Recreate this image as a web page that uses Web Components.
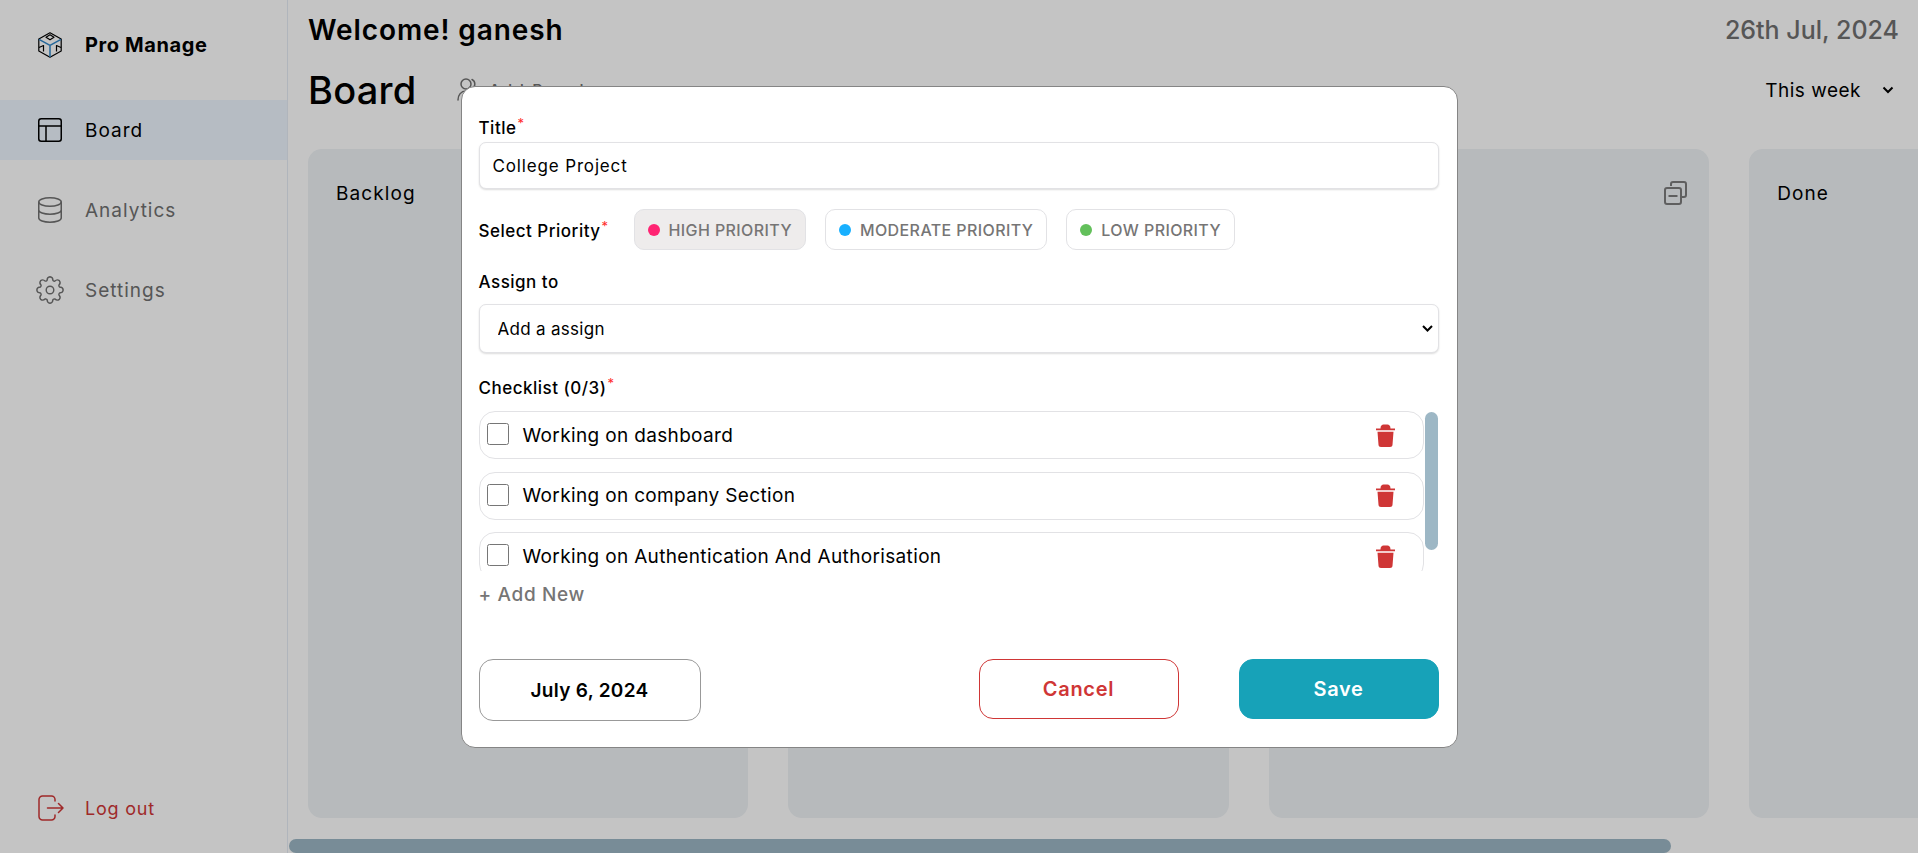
<!DOCTYPE html>
<html lang="en">
<head>
<meta charset="utf-8">
<title>Pro Manage</title>
<style>
    html, body { margin: 0; height: 100%; overflow: hidden; background: #fff; }
    body { font-family: "Inter", "Liberation Sans", sans-serif; color: #000; }
    svg { display: block; }
</style>
</head>
<body>
<app-shell>
    <side-bar slot="side">
        <nav-item active>
            <svg slot="icon" width="24" height="24" viewBox="0 0 24 24" fill="none" stroke="#000" stroke-width="1.5"><rect x=".75" y=".75" width="22.5" height="22.5" rx="2.5"/><path d="M1 8h22M8 8v15"/></svg>
            Board
        </nav-item>
        <nav-item>
            <svg slot="icon" width="24" height="26" viewBox="0 0 24 26" fill="none" stroke="#707070" stroke-width="1.5"><ellipse cx="12" cy="5" rx="11.25" ry="4.2"/><path d="M.75 5v16c0 2.4 5 4.2 11.25 4.2s11.25-1.8 11.25-4.2V5M.75 13c0 2.4 5 4.2 11.25 4.2s11.25-1.8 11.25-4.2"/></svg>
            Analytics
        </nav-item>
        <nav-item>
            <svg slot="icon" id="gear" width="28" height="28" viewBox="0 0 28 28" fill="none" stroke="#707070" stroke-width="1.4" stroke-linejoin="round"><circle cx="14" cy="14" r="3.8"/></svg>
            Settings
        </nav-item>
    </side-bar>
    <board-page slot="main"></board-page>
</app-shell>
<task-modal></task-modal>

<script>
    class AppShell extends HTMLElement {
        constructor() {
            super();
            const shadow = this.attachShadow({ mode: 'open' });
            shadow.innerHTML = `
                <style>
                    :host { display: flex; width: 100vw; height: 100vh; }
                    ::slotted([slot="side"]) { flex: 0 0 288px; }
                    ::slotted([slot="main"]) { flex: 1 1 0; min-width: 0; }
                </style>
                <slot name="side"></slot>
                <slot name="main"></slot>
            `;
        }
    }

    class SideBar extends HTMLElement {
        constructor() {
            super();
            const shadow = this.attachShadow({ mode: 'open' });
            shadow.innerHTML = `
                <style>
                    :host {
                        display: flex;
                        flex-direction: column;
                        box-sizing: border-box;
                        height: 100vh;
                        border-right: 1px solid #e6ecf5;
                        font-family: "Inter", "Liberation Sans", sans-serif;
                    }
                    .logo {
                        display: flex;
                        align-items: center;
                        gap: 23px;
                        height: 90px;
                        margin-bottom: 10px;
                        padding-left: 38px;
                        font-size: 20px;
                        font-weight: 700;
                        letter-spacing: .6px;
                    }
                    .links {
                        display: flex;
                        flex-direction: column;
                        gap: 20px;
                    }
                    .logout {
                        display: flex;
                        align-items: center;
                        gap: 21px;
                        margin-top: auto;
                        height: 60px;
                        margin-bottom: 15px;
                        padding-left: 38px;
                        color: #cf3636;
                        font-size: 18px;
                        letter-spacing: .8px;
                    }
                </style>
                <div class="logo">
                    <svg width="24" height="26" viewBox="0 0 24 26" fill="none" stroke="#000" stroke-width="1.2" stroke-linejoin="round">
                        <path d="M12 .8 23.2 7v12L12 25.200.8 19V7z"/>
                        <path d="M12 2.800 16 5.300 12 7.800 8 5.300z"/>
                        <path d="M1 15.500 5.500 13.500v6M23 15.500 18.500 13.500v6"/>
                        <path d="M1 7.400 12 13.400 23 7.400M12 13.400V25" stroke="#2f86c9" stroke-width="1.5"/>
                    </svg>
                    <span>Pro Manage</span>
                </div>
                <div class="links"><slot></slot></div>
                <div class="logout">
                    <svg width="26" height="26" viewBox="0 0 26 26" fill="none" stroke="#cf3636" stroke-width="1.5" stroke-linecap="round" stroke-linejoin="round">
                        <path d="M17 6V4.500A3.500 3.500 0 0 0 13.500 1H4.500A3.500 3.500 0 0 0 1 4.500v17A3.500 3.500 0 0 0 4.500 25h9a3.500 3.500 0 0 0 3.500-3.500V20"/>
                        <path d="M9.500 13H25M20.500 8.500 25 13l-4.500 4.500"/>
                    </svg>
                    <span>Log out</span>
                </div>
            `;
        }
    }

    class NavItem extends HTMLElement {
        constructor() {
            super();
            const shadow = this.attachShadow({ mode: 'open' });
            shadow.innerHTML = `
                <style>
                    :host {
                        display: flex;
                        align-items: center;
                        height: 60px;
                        padding-left: 38px;
                        gap: 23px;
                        color: #707070;
                        font-size: 19px;
                        letter-spacing: 1px;
                        font-family: "Inter", "Liberation Sans", sans-serif;
                    }
                    :host([active]) {
                        background: #edf5fe;
                        color: #000;
                    }
                    .icon {
                        display: flex;
                        justify-content: center;
                        width: 24px;
                    }
                    ::slotted(svg) { flex-shrink: 0; }
                </style>
                <div class="icon"><slot name="icon"></slot></div>
                <span><slot></slot></span>
            `;
        }
    }

    class BoardColumn extends HTMLElement {
        constructor() {
            super();
            const shadow = this.attachShadow({ mode: 'open' });
            shadow.innerHTML = `
                <style>
                    :host {
                        display: block;
                        flex: 0 0 440.4px;
                        box-sizing: border-box;
                        padding: 32px 21px 0 28px;
                        border-radius: 14px;
                        background: #eef2f5;
                        font-family: "Inter", "Liberation Sans", sans-serif;
                    }
                    .head {
                        display: flex;
                        align-items: center;
                        justify-content: space-between;
                        height: 24px;
                        font-size: 19px;
                        letter-spacing: 1.1px;
                    }
                </style>
                <div class="head">
                    <span><slot></slot></span>
                    <svg width="24" height="24" viewBox="0 0 24 24" fill="none" stroke="#7c7c7c" stroke-width="2" stroke-linejoin="round">
                        <path d="M7 5V3a2 2 0 0 1 2-2h11a2 2 0 0 1 2 2v11a2 2 0 0 1-2 2h-3"/>
                        <rect x="1" y="7" width="16" height="16" rx="2"/>
                        <path d="M4.500 15h9"/>
                    </svg>
                </div>
            `;
        }
    }

    class BoardPage extends HTMLElement {
        constructor() {
            super();
            const shadow = this.attachShadow({ mode: 'open' });
            shadow.innerHTML = `
                <style>
                    :host {
                        display: flex;
                        flex-direction: column;
                        height: 100vh;
                        font-family: "Inter", "Liberation Sans", sans-serif;
                    }
                    .row {
                        display: flex;
                        align-items: center;
                        flex: 0 0 60px;
                        padding: 0 19px 0 20px;
                    }
                    .welcome { font-size: 28px; font-weight: 600; letter-spacing: .9px; }
                    .today { margin-left: auto; color: #707070; font-size: 25px; font-weight: 500; }
                    .title { width: 149px; font-size: 38px; font-weight: 500; letter-spacing: .2px; }
                    .people { display: flex; align-items: center; gap: 6px; color: #707070; font-size: 16px; font-weight: 500; letter-spacing: 2px; }
                    .range { display: flex; align-items: center; gap: 21px; margin: 0 5px 0 auto; font-size: 19px; letter-spacing: .5px; }
                    .board {
                        display: flex;
                        flex: 1 1 0;
                        min-height: 0;
                        box-sizing: border-box;
                        gap: 40px;
                        padding: 29px 0 21px 20px;
                        overflow: hidden;
                    }
                    .thumb {
                        flex: 0 0 14px;
                        width: 1382px;
                        margin-left: 1px;
                        border-radius: 7px;
                        background: #9db7c5;
                    }
                </style>
                <div class="row">
                    <span class="welcome">Welcome! ganesh</span>
                    <span class="today">26th Jul, 2024</span>
                </div>
                <div class="row">
                    <span class="title">Board</span>
                    <span class="people">
                        <svg width="26" height="24" viewBox="0 0 26 24" fill="none" stroke="#707070" stroke-width="1.5" stroke-linecap="round">
                            <circle cx="9" cy="6" r="5"/>
                            <path d="M1 22c0-5 3-9 8-9s8 4 8 9M15 1.500a5 5 0 0 1 0 9M19 14c3 1 5 4 5 8"/>
                        </svg>
                        Add People
                    </span>
                    <span class="range">
                        This week
                        <svg width="12" height="8" viewBox="0 0 12 8" fill="none" stroke="#000" stroke-width="2"><path d="M1.500 1.500 6 6l4.500-4.500"/></svg>
                    </span>
                </div>
                <div class="board">
                    <board-column>Backlog</board-column>
                    <board-column></board-column>
                    <board-column></board-column>
                    <board-column>Done</board-column>
                </div>
                <div class="thumb"></div>
            `;
        }
    }

    class PriorityChip extends HTMLElement {
        constructor() {
            super();
            const shadow = this.attachShadow({ mode: 'open' });
            const dot = this.getAttribute('dot');
            shadow.innerHTML = `
                <style>
                    :host {
                        display: flex;
                        align-items: center;
                        box-sizing: border-box;
                        gap: 9px;
                        height: 41px;
                        padding: 0 13px;
                        border: 1px solid #e2e2e5;
                        border-radius: 10px;
                        background: #fff;
                        color: #767575;
                        font-size: 16px;
                        font-weight: 500;
                        letter-spacing: .4px;
                        white-space: nowrap;
                        font-family: "Inter", "Liberation Sans", sans-serif;
                    }
                    :host([selected]) { background: #eeecec; }
                    i { flex: 0 0 12px; height: 12px; border-radius: 50%; background: ${dot}; }
                </style>
                <i></i>
                <slot></slot>
            `;
        }
    }

    class CheckItem extends HTMLElement {
        constructor() {
            super();
            const shadow = this.attachShadow({ mode: 'open' });
            shadow.innerHTML = `
                <style>
                    :host {
                        display: flex;
                        align-items: center;
                        box-sizing: border-box;
                        flex: 0 0 48px;
                        height: 48px;
                        margin-bottom: 12.500px;
                        padding: 0 28px 0 7px;
                        border: 1px solid #e2e2e5;
                        border-radius: 16px;
                        font-size: 19px;
                        letter-spacing: .35px;
                        font-family: "Inter", "Liberation Sans", sans-serif;
                    }
                    input {
                        width: 22px;
                        height: 22px;
                        margin: 0 14px 2px 0;
                        flex-shrink: 0;
                    }
                    span { flex: 1; }
                </style>
                <input type="checkbox">
                <span><slot></slot></span>
                <svg width="19" height="23" viewBox="0 0 19 23" fill="#cf3636">
                    <path d="M4.500 4.500C4.500 1.500 6 .5 7.500.5h4c1.500 0 3 1 3 4h4a.9.9 0 0 1 0 1.800H.5a.9.9 0 0 1 0-1.800z"/>
                    <path d="M1.500 7.700h16l-1 13c-.1 1.300-1 2.300-2.500 2.300H5c-1.500 0-2.400-1-2.500-2.300z"/>
                </svg>
            `;
        }
    }

    class FieldLabel extends HTMLElement {
        constructor() {
            super();
            const shadow = this.attachShadow({ mode: 'open' });
            shadow.innerHTML = `
                <style>
                    :host {
                        display: block;
                        height: 24px;
                        line-height: 24px;
                        font-size: 17px;
                        font-weight: 450;
                        letter-spacing: .5px;
                        white-space: nowrap;
                        font-family: "Inter", "Liberation Sans", sans-serif;
                    }
                    b {
                        position: relative;
                        top: -6px;
                        margin-left: 1px;
                        color: #ff2a2a;
                        font-size: 13px;
                        font-weight: 400;
                        line-height: 0;
                    }
                </style>
                <slot></slot>${this.hasAttribute('required') ? '<b>*</b>' : ''}
            `;
        }
    }

    class TaskModal extends HTMLElement {
        constructor() {
            super();
            const shadow = this.attachShadow({ mode: 'open' });
            const chevron = "data:image/svg+xml,%3Csvg xmlns='http://www.w3.org/2000/svg' width='11' height='7' fill='none' stroke='%23000' stroke-width='2'%3E%3Cpath d='M1 1l4.500 4.500L10 1'/%3E%3C/svg%3E";
            shadow.innerHTML = `
                <style>
                    :host {
                        position: fixed;
                        inset: 0;
                        display: flex;
                        justify-content: center;
                        align-items: flex-start;
                        background: rgba(0, 0, 0, .23);
                        font-family: "Inter", "Liberation Sans", sans-serif;
                    }
                    .modal {
                        box-sizing: border-box;
                        width: 997px;
                        height: 662px;
                        margin-top: 86px;
                        padding: 29px 18px 0 17px;
                        border: 1px solid #858585;
                        border-radius: 14px;
                        background: #fff;
                        display: flex;
                        flex-direction: column;
                    }
                    .box {
                        box-sizing: border-box;
                        width: 100%;
                        margin: 0;
                        border: 1px solid #e2e2e5;
                        border-radius: 7px;
                        background-color: #fff;
                        box-shadow: 0 1px 2px rgba(0, 0, 0, .14);
                        color: #000;
                        font: 17px "Inter", "Liberation Sans", sans-serif;
                        outline: none;
                    }
                    input.box { height: 47px; margin-top: 2px; padding: 0 13px; letter-spacing: .85px; }
                    select.box {
                        height: 49px;
                        margin-top: 10px;
                        padding: 0 18px;
                        letter-spacing: .3px;
                        appearance: none;
                        background-image: url("${chevron}");
                        background-repeat: no-repeat;
                        background-position: right 5px center;
                    }
                    .priority {
                        display: flex;
                        align-items: center;
                        height: 41px;
                        margin-top: 20px;
                        gap: 20px;
                    }
                    .priority field-label { width: 135px; margin-top: 3px; }
                    priority-chip + priority-chip { margin-left: -1px; }
                    .assign { margin-top: 20px; }
                    .checklist { margin-top: 23px; }
                    .scroller {
                        display: flex;
                        align-items: flex-start;
                        height: 160px;
                        margin-top: 11px;
                    }
                    .list {
                        display: flex;
                        flex-direction: column;
                        flex: 0 0 945px;
                        height: 160px;
                        overflow: hidden;
                    }
                    .thumb {
                        flex: 0 0 13px;
                        height: 138px;
                        margin: 1px 0 0 1px;
                        border-radius: 7px;
                        background: #9db7c5;
                    }
                    .add {
                        height: 24px;
                        margin-top: 12px;
                        line-height: 24px;
                        color: #767575;
                        font-size: 19px;
                        font-weight: 500;
                        letter-spacing: .65px;
                    }
                    .foot {
                        display: flex;
                        align-items: flex-start;
                        gap: 60px;
                        margin-top: 52px;
                    }
                    button {
                        box-sizing: border-box;
                        width: 200px;
                        height: 60px;
                        border: 1px solid #cf3636;
                        border-radius: 14px;
                        background: #fff;
                        color: #cf3636;
                        font: 600 20px "Inter", "Liberation Sans", sans-serif;
                        letter-spacing: .7px;
                    }
                    .date {
                        width: 222px;
                        height: 62px;
                        margin-right: auto;
                        border-color: #999;
                        color: #000;
                        font-size: 19px;
                        letter-spacing: .3px;
                    }
                    .save { border-color: #17a2b8; background: #17a2b8; color: #fff; }
                </style>
                <div class="modal">
                    <field-label required>Title</field-label>
                    <input class="box" value="College Project">
                    <div class="priority">
                        <field-label required>Select Priority</field-label>
                        <priority-chip dot="#ff2473" selected>HIGH PRIORITY</priority-chip>
                        <priority-chip dot="#18b0ff">MODERATE PRIORITY</priority-chip>
                        <priority-chip dot="#63c05b">LOW PRIORITY</priority-chip>
                    </div>
                    <field-label class="assign">Assign to</field-label>
                    <select class="box"><option>Add a assign</option></select>
                    <field-label class="checklist" required>Checklist (0/3)</field-label>
                    <div class="scroller">
                        <div class="list">
                            <check-item>Working on dashboard</check-item>
                            <check-item>Working on company Section</check-item>
                            <check-item>Working on Authentication And Authorisation</check-item>
                        </div>
                        <div class="thumb"></div>
                    </div>
                    <div class="add">+ Add New</div>
                    <div class="foot">
                        <button class="date">July 6, 2024</button>
                        <button>Cancel</button>
                        <button class="save">Save</button>
                    </div>
                </div>
            `;
        }
    }

    customElements.define('nav-item', NavItem);
    customElements.define('side-bar', SideBar);
    customElements.define('board-column', BoardColumn);
    customElements.define('board-page', BoardPage);
    customElements.define('app-shell', AppShell);
    customElements.define('priority-chip', PriorityChip);
    customElements.define('check-item', CheckItem);
    customElements.define('field-label', FieldLabel);
    customElements.define('task-modal', TaskModal);

    // gear outline for the settings link, 8 teeth
    let d = '';
    for (let i = 0; i < 8; i++) {
        const a = i * Math.PI / 4;
        const pt = (r, off) => (14 + r * Math.sin(a + off)).toFixed(2) + ' ' + (14 - r * Math.cos(a + off)).toFixed(2);
        d += (i ? 'L' : 'M') + pt(10, -0.3) + 'Q' + pt(13.2, -0.22) + ' ' + pt(13.2, 0) + 'Q' + pt(13.2, 0.22) + ' ' + pt(10, 0.3) + 'Q' + pt(9.6, 0.39) + ' ' + pt(10, 0.485);
    }
    const gearPath = document.createElementNS('http://www.w3.org/2000/svg', 'path');
    gearPath.setAttribute('d', d + 'Z');
    document.getElementById('gear').appendChild(gearPath);
</script>
</body>
</html>
